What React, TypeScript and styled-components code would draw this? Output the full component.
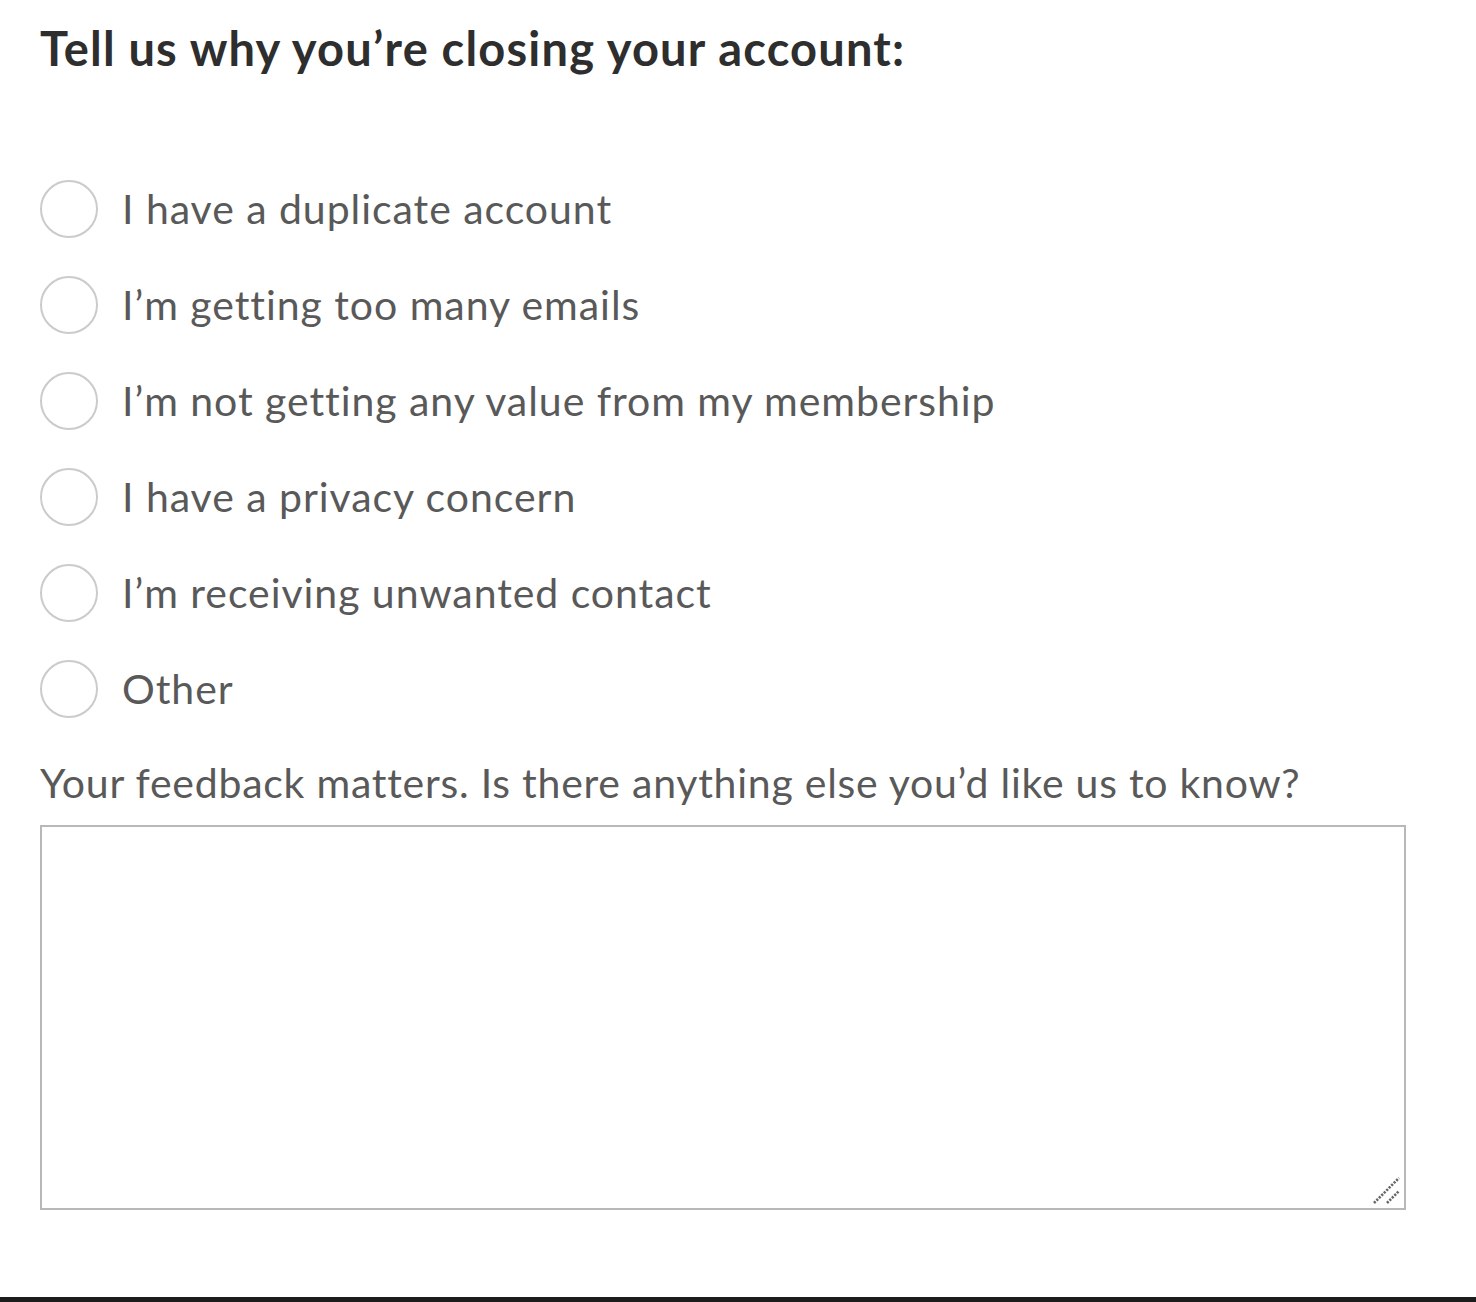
import React from "react";
import styled, { createGlobalStyle } from "styled-components";

const Global = createGlobalStyle`
  html, body { margin: 0; padding: 0; background: #ffffff; }
  body { font-family: Lato, "Open Sans", sans-serif; }
`;

const Page = styled.div`
  min-height: 1302px;
  display: flex;
  flex-direction: column;
  box-sizing: border-box;
`;

const Form = styled.form`
  display: flex;
  flex-direction: column;
  padding: 19px 0 0 40px;
  width: 1366px;
`;

const Heading = styled.h2`
  margin: 0;
  font-family: Lato, sans-serif;
  font-weight: 700;
  font-size: 47px;
  line-height: 58px;
  color: #2e2e2e;
  letter-spacing: 1.2px;
`;

const Options = styled.div`
  display: flex;
  flex-direction: column;
  margin-top: 84px;
`;

const OptionRow = styled.label`
  display: flex;
  align-items: center;
  height: 96px;
  gap: 24px;
  cursor: pointer;
`;

const Circle = styled.span`
  width: 54px;
  height: 54px;
  border-radius: 50%;
  border: 2px solid #cbcbcb;
  flex: none;
  background: #fff;
`;

const OptionText = styled.span`
  font-size: 41px;
  line-height: 50px;
  color: #595959;
  letter-spacing: 0.95px;
`;

const FeedbackLabel = styled.div`
  margin-top: 21px;
  font-size: 41px;
  line-height: 50px;
  color: #595959;
  letter-spacing: 0.75px;
`;

const AreaWrap = styled.div`
  position: relative;
  margin-top: 17px;
  width: 1366px;
  height: 385px;
`;

const TextArea = styled.textarea`
  display: block;
  box-sizing: border-box;
  width: 100%;
  height: 100%;
  border: 2px solid #b8b8b8;
  border-radius: 0;
  resize: none;
  outline: none;
  background: #fff;
`;

const Grip = styled.svg`
  position: absolute;
  right: 4px;
  bottom: 5px;
  width: 30px;
  height: 30px;
`;

const Spacer = styled.div`
  flex: 1;
`;

const BottomBar = styled.div`
  height: 5px;
  background: #1c1c1c;
`;

const reasons = [
  "I have a duplicate account",
  "I\u2019m getting too many emails",
  "I\u2019m not getting any value from my membership",
  "I have a privacy concern",
  "I\u2019m receiving unwanted contact",
  "Other",
];

export default function App() {
  return (
    <Page>
      <Global />
      <Form>
        <Heading>Tell us why you’re closing your account:</Heading>
        <Options>
          {reasons.map((r) => (
            <OptionRow key={r}>
              <Circle />
              <OptionText>{r}</OptionText>
            </OptionRow>
          ))}
        </Options>
        <FeedbackLabel>
          Your feedback matters. Is there anything else you’d like us to know?
        </FeedbackLabel>
        <AreaWrap>
          <TextArea />
          <Grip viewBox="0 0 30 30">
            <line x1="2" y1="28" x2="27" y2="3" stroke="#666" strokeWidth="2.6" strokeDasharray="2.2 1.3" />
            <line x1="15" y1="28" x2="27" y2="16" stroke="#666" strokeWidth="2.6" strokeDasharray="2.2 1.3" />
          </Grip>
        </AreaWrap>
      </Form>
      <Spacer />
      <BottomBar />
    </Page>
  );
}
